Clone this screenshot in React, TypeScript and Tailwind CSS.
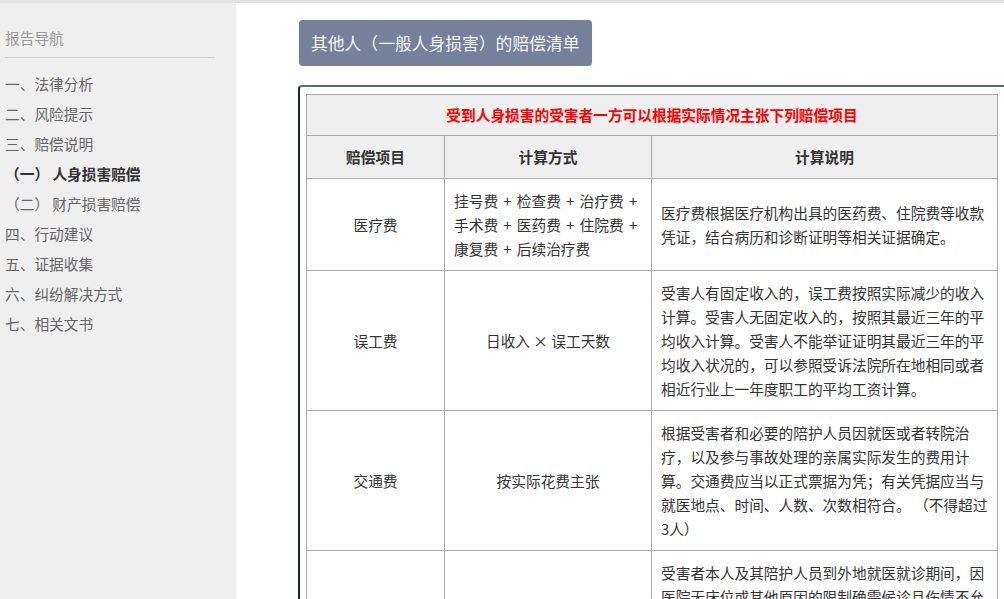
const navItems = [
  { label: '一、法律分析' },
  { label: '二、风险提示' },
  { label: '三、赔偿说明' },
  { label: '（一） 人身损害赔偿', active: true },
  { label: '（二） 财产损害赔偿' },
  { label: '四、行动建议' },
  { label: '五、证据收集' },
  { label: '六、纠纷解决方式' },
  { label: '七、相关文书' },
]

const rows = [
  {
    name: '医疗费',
    calc: '挂号费 + 检查费 + 治疗费 + 手术费 + 医药费 + 住院费 + 康复费 + 后续治疗费',
    calcLeft: true,
    note: '医疗费根据医疗机构出具的医药费、住院费等收款凭证，结合病历和诊断证明等相关证据确定。',
  },
  {
    name: '误工费',
    calc: '日收入 × 误工天数',
    note: '受害人有固定收入的，误工费按照实际减少的收入计算。受害人无固定收入的，按照其最近三年的平均收入计算。受害人不能举证证明其最近三年的平均收入状况的，可以参照受诉法院所在地相同或者相近行业上一年度职工的平均工资计算。',
  },
  {
    name: '交通费',
    calc: '按实际花费主张',
    note: '根据受害者和必要的陪护人员因就医或者转院治疗，以及参与事故处理的亲属实际发生的费用计算。交通费应当以正式票据为凭；有关凭据应当与就医地点、时间、人数、次数相符合。 （不得超过3人）',
  },
  {
    name: '住宿费',
    calc: '按实际花费主张',
    note: '受害者本人及其陪护人员到外地就医就诊期间，因医院无床位或其他原因的限制确需候诊且伤情不允许往返的，其住宿费用可以参照国家机关一般工作人员的出差住宿标准予以确定。受害者确有必要到外地治疗，因客观原因不能住院的，受害者本人及其陪护人员实际发生的住宿费，其合理部分应予赔偿。',
  },
]

export default function App() {
  return (
    <div
      className="flex h-[599px] w-full flex-col overflow-hidden bg-white text-[#333]"
      style={{ fontFamily: '"Noto Sans CJK SC", "Noto Sans", sans-serif' }}
    >
      <div className="h-[3px] shrink-0 bg-[#e2e4e4]" />
      <div className="flex min-h-0 flex-1">
        {/* Sidebar */}
        <aside className="w-[236px] shrink-0 bg-[#efefef] px-[5px] pt-[24px]">
          <div className="text-[14.7px] leading-[22px] text-[#999]">报告导航</div>
          <div className="mt-[8px] mr-[16px] h-px bg-[#cfcfcf]" />
          <ul className="mt-[11px]">
            {navItems.map((item) => (
              <li
                key={item.label}
                className={
                  item.active
                    ? 'h-[30px] text-[14.7px] leading-[30px] font-bold text-[#333]'
                    : 'h-[30px] text-[14.7px] leading-[30px] text-[#666]'
                }
              >
                {item.label}
              </li>
            ))}
          </ul>
        </aside>

        {/* Main */}
        <main className="min-w-0 flex-1 pt-[17px] pl-[63px]">
          <div className="inline-block rounded-[4px] bg-[#75819a] px-[12px] py-[10px] text-[16.8px] leading-[26px] text-[#f4f5f7]">
            其他人（一般人身损害）的赔偿清单
          </div>

          <div className="mt-[19px] -ml-px w-[709px] rounded-tl-[4px] border-t-2 border-l-2 border-t-[#5b6678] border-l-[#1c2536] pt-[7px] pl-[6px]">
            <table className="w-[691px] table-fixed border-collapse border border-[#bdbdbd] text-[14.7px] leading-[24px]">
              <colgroup>
                <col className="w-[138px]" />
                <col className="w-[207px]" />
                <col className="w-[346px]" />
              </colgroup>
              <thead>
                <tr className="bg-[#efefef]">
                  <th colSpan={3} className="border border-[#a8a8a8] py-[8px] text-center font-bold text-[#ff0000]">
                    受到人身损害的受害者一方可以根据实际情况主张下列赔偿项目
                  </th>
                </tr>
                <tr className="bg-[#efefef]">
                  <th className="border border-[#a8a8a8] py-[9px] font-bold">赔偿项目</th>
                  <th className="border border-[#a8a8a8] py-[9px] font-bold">计算方式</th>
                  <th className="border border-[#a8a8a8] py-[9px] font-bold">计算说明</th>
                </tr>
              </thead>
              <tbody>
                {rows.map((row) => (
                  <tr key={row.name}>
                    <td className="border border-[#a8a8a8] px-[9px] py-[9.5px] text-center align-middle">{row.name}</td>
                    <td
                      className={
                        row.calcLeft
                          ? 'border border-[#a8a8a8] px-[9px] py-[9.5px] text-left align-middle [word-spacing:2px]'
                          : 'border border-[#a8a8a8] px-[9px] py-[9.5px] text-center align-middle'
                      }
                    >
                      {row.calc}
                    </td>
                    <td className="border border-[#a8a8a8] px-[9px] py-[9.5px] text-left align-middle">{row.note}</td>
                  </tr>
                ))}
              </tbody>
            </table>
          </div>
        </main>
      </div>
    </div>
  )
}
